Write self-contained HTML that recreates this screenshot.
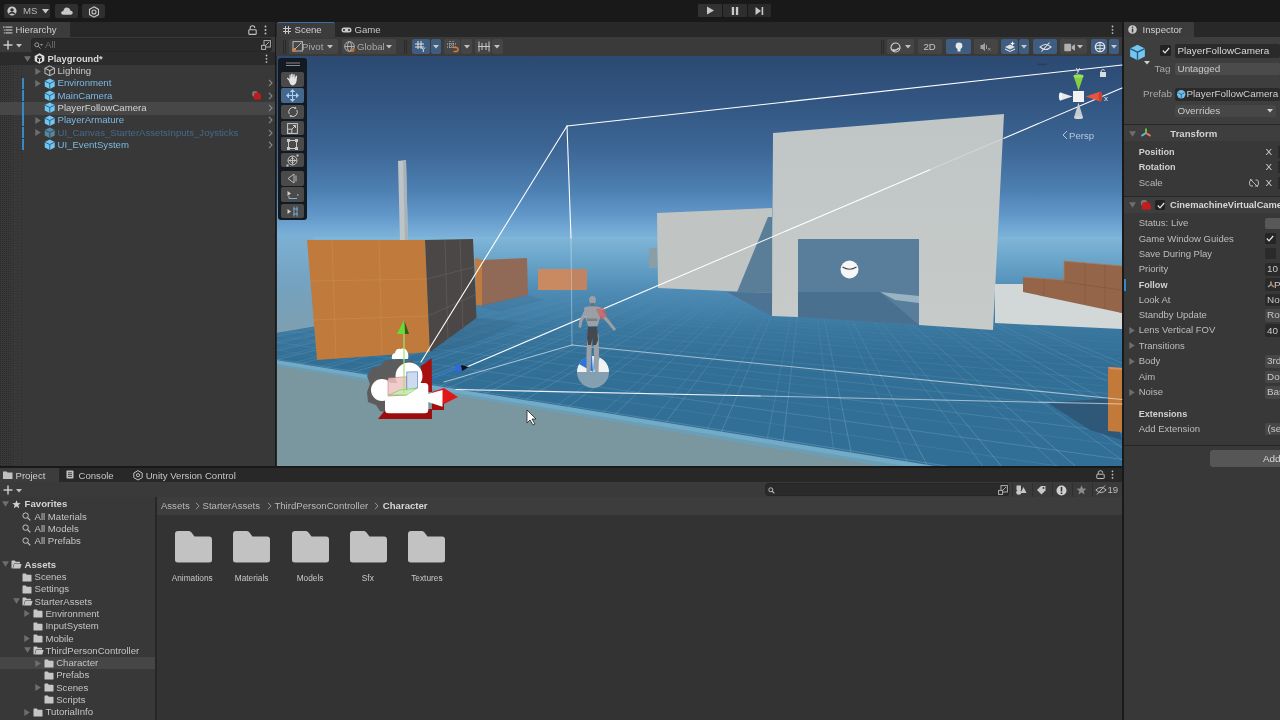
<!DOCTYPE html>
<html><head><meta charset="utf-8">
<style>
*{box-sizing:border-box}
html,body{margin:0;padding:0}
body{width:1280px;height:720px;overflow:hidden;background:#191919;position:relative;-webkit-font-smoothing:antialiased;font-family:"Liberation Sans",sans-serif;font-size:9.6px;color:#c4c4c4}
.a{position:absolute}
.t{position:absolute;white-space:nowrap;line-height:12px}
.b{font-weight:bold}
.panel{position:absolute;background:#383838}
.tabbar{position:absolute;background:#282828}
.tab{position:absolute;background:#3c3c3c}
.tb{position:absolute;background:#3c3c3c}
.btn{position:absolute;background:#2f2f2f;border-radius:2px}
svg{position:absolute;overflow:visible}
</style></head><body>
<div id="root" style="position:absolute;left:0;top:0;width:1280px;height:720px;will-change:transform"><svg width="0" height="0" style="position:absolute">
<defs>
<symbol id="cube" viewBox="0 0 12 12"><polygon points="6,0.6 11.2,3.2 11.2,8.8 6,11.4 0.8,8.8 0.8,3.2" fill="#71c6f2"/><polyline points="0.8,3.2 6,5.8 11.2,3.2 M6,5.8" fill="none" stroke="#2c5f80" stroke-width="1"/><line x1="6" y1="5.8" x2="6" y2="11.4" stroke="#2c5f80" stroke-width="1"/></symbol>
<symbol id="cubeo" viewBox="0 0 12 12"><polygon points="6,0.9 11,3.4 11,8.6 6,11.1 1,8.6 1,3.4" fill="none" stroke="#b8b8b8" stroke-width="1.1"/><polyline points="1,3.4 6,5.9 11,3.4" fill="none" stroke="#b8b8b8" stroke-width="1.1"/><line x1="6" y1="5.9" x2="6" y2="11.1" stroke="#b8b8b8" stroke-width="1.1"/></symbol>
<symbol id="folder" viewBox="0 0 10 9"><path d="M0.5,1.2 Q0.5,0.6 1.1,0.6 L3.8,0.6 L4.8,1.8 L9,1.8 Q9.5,1.8 9.5,2.4 L9.5,8 Q9.5,8.5 9,8.5 L1,8.5 Q0.5,8.5 0.5,8 Z" fill="#c6c6c6"/></symbol>
<symbol id="folderopen" viewBox="0 0 11 9"><path d="M0.5,1.2 Q0.5,0.6 1.1,0.6 L3.8,0.6 L4.8,1.8 L8.6,1.8 Q9.1,1.8 9.1,2.4 L9.1,3.4 L3,3.4 L1.6,8.5 L0.5,8.5 Z" fill="#c6c6c6"/><path d="M3.3,4.1 L10.6,4.1 L9.2,8.5 L2,8.5 Z" fill="#c6c6c6"/></symbol>
<symbol id="tri_r" viewBox="0 0 6 7"><polygon points="0.3,0 5.8,3.5 0.3,7" fill="#6e6e6e"/></symbol>
<symbol id="tri_d" viewBox="0 0 7 6"><polygon points="0,0.3 7,0.3 3.5,5.8" fill="#6e6e6e"/></symbol>
<symbol id="chev" viewBox="0 0 5 8"><polyline points="1,0.8 4,4 1,7.2" fill="none" stroke="#8a8a8a" stroke-width="1.1"/></symbol>
</defs></svg>
<div class="btn" style="left:4px;top:4px;width:46px;height:14px;background:#2f2f2f"></div>
<svg style="left:7px;top:6px" width="10" height="10"><circle cx="5" cy="5" r="4.6" fill="#c8c8c8"/><circle cx="5" cy="3.9" r="1.7" fill="#2c2c2c"/><path d="M1.9,8.2 Q5,5.2 8.1,8.2" stroke="#2c2c2c" stroke-width="1.6" fill="none"/></svg>
<div class="t" style="left:23px;top:5px;color:#b8b8b8;font-size:9.6px">MS</div>
<svg style="left:42px;top:9px" width="7" height="5"><polygon points="0,0 7,0 3.5,4.5" fill="#c8c8c8"/></svg>
<div class="btn" style="left:55px;top:4px;width:23px;height:14px;background:#2f2f2f"></div>
<svg style="left:61px;top:7px" width="12" height="8"><path d="M2.5,7.8 Q0,7.8 0.2,5.6 Q0.5,3.8 2.4,4 Q2.8,1 5.6,0.6 Q8.6,0.6 9.3,3.4 Q11.8,3.6 11.8,5.8 Q11.6,7.8 9.5,7.8 Z" fill="#c8c8c8"/></svg>
<div class="btn" style="left:82px;top:4px;width:23px;height:14px;background:#2f2f2f"></div>
<svg style="left:88px;top:5.5px" width="12" height="12"><polygon points="6,0.8 10.5,3.4 10.5,8.6 6,11.2 1.5,8.6 1.5,3.4" fill="none" stroke="#c8c8c8" stroke-width="1.1"/><circle cx="6" cy="6" r="2" fill="none" stroke="#c8c8c8" stroke-width="1.1"/></svg>
<div class="btn" style="left:698.3px;top:3.8px;width:23.4px;height:13.6px;background:#323232;border-radius:1px"></div>
<div class="btn" style="left:723px;top:3.8px;width:23.6px;height:13.6px;background:#2e2e2e;border-radius:1px"></div>
<div class="btn" style="left:748px;top:3.8px;width:23.4px;height:13.6px;background:#2a2a2a;border-radius:1px"></div>
<svg style="left:706px;top:6px" width="9" height="9"><polygon points="1,0.5 8,4.5 1,8.5" fill="#c8c8c8"/></svg>
<svg style="left:731px;top:6.5px" width="8" height="8"><rect x="0.8" y="0" width="2.3" height="8" fill="#c8c8c8"/><rect x="4.9" y="0" width="2.3" height="8" fill="#c8c8c8"/></svg>
<svg style="left:755px;top:6.5px" width="9" height="8"><polygon points="0.5,0 6,4 0.5,8" fill="#c8c8c8"/><rect x="6.6" y="0" width="1.6" height="8" fill="#c8c8c8"/></svg>


<div class="tabbar" style="left:0;top:22px;width:275px;height:15px"></div>
<div class="tab" style="left:0;top:22px;width:70px;height:15px"></div>
<svg style="left:3px;top:26px" width="10" height="8"><g fill="#c0c0c0"><rect x="0" y="0.5" width="1.6" height="1.2"/><rect x="2.4" y="0.5" width="7" height="1.2"/><rect x="2.4" y="3.4" width="7" height="1.2"/><rect x="2.4" y="6.3" width="7" height="1.2"/><rect x="0.8" y="3.4" width="1" height="1.2"/><rect x="0.8" y="6.3" width="1" height="1.2"/></g></svg>
<div class="t" style="left:15.5px;top:24px;color:#cfcfcf">Hierarchy</div>
<svg style="left:248px;top:24.5px" width="9" height="10"><path d="M2.2,4.8 L2.2,3 Q2.2,0.8 4.5,0.8 Q6.8,0.8 6.8,3" fill="none" stroke="#c0c0c0" stroke-width="1.1"/><rect x="0.8" y="4.8" width="7.4" height="4.6" rx="0.6" fill="none" stroke="#c0c0c0" stroke-width="1.1"/></svg>
<svg style="left:263.5px;top:24.5px" width="3" height="10"><circle cx="1.5" cy="1.5" r="1" fill="#c0c0c0"/><circle cx="1.5" cy="5" r="1" fill="#c0c0c0"/><circle cx="1.5" cy="8.5" r="1" fill="#c0c0c0"/></svg>
<div class="panel" style="left:0;top:37px;width:275px;height:429px"></div>
<div class="tb" style="left:0;top:37px;width:275px;height:15px;background:#3a3a3a"></div>
<svg style="left:3px;top:40px" width="10" height="10"><rect x="4.3" y="0.5" width="1.4" height="9" fill="#d0d0d0"/><rect x="0.5" y="4.3" width="9" height="1.4" fill="#d0d0d0"/></svg>
<svg style="left:15.5px;top:43.5px" width="6" height="4"><polygon points="0,0 6,0 3,3.5" fill="#c0c0c0"/></svg>
<div class="a" style="left:31px;top:38px;width:241px;height:13.5px;background:#2a2a2a;border-radius:3px;border:1px solid #252525"></div>
<svg style="left:34px;top:41.5px" width="9" height="7"><circle cx="2.8" cy="2.8" r="2" fill="none" stroke="#9a9a9a" stroke-width="1"/><line x1="4.2" y1="4.2" x2="6.5" y2="6.5" stroke="#9a9a9a" stroke-width="1"/><polygon points="6,2 9,2 7.5,4" fill="#9a9a9a"/></svg>
<div class="t" style="left:45px;top:38.5px;color:#6a6a6a">All</div>
<svg style="left:261px;top:40px" width="10" height="10"><rect x="3" y="0.6" width="6.4" height="6.4" fill="none" stroke="#b0b0b0" stroke-width="1"/><rect x="0.6" y="5.4" width="4" height="4" fill="#2a2a2a" stroke="#b0b0b0" stroke-width="1"/><line x1="5" y1="5" x2="8" y2="2" stroke="#b0b0b0" stroke-width="1"/></svg>
<div class="a" style="left:0;top:52px;width:275px;height:13px;background:#2b2b2b"></div>
<svg style="left:0;top:65px" width="22" height="401"><defs><pattern id="dots" width="2" height="2" patternUnits="userSpaceOnUse"><rect width="2" height="2" fill="#383838"/><rect x="0" y="0" width="1" height="1" fill="#2a2a2a"/></pattern><pattern id="dots2" width="4" height="3" patternUnits="userSpaceOnUse"><rect width="4" height="3" fill="#383838"/><rect x="1" y="1" width="1" height="1" fill="#2e2e2e"/></pattern></defs><rect x="0" y="0" width="12.5" height="401" fill="url(#dots)"/><rect x="12.5" y="0" width="9.5" height="401" fill="url(#dots2)"/></svg>
<div class="a" style="left:0;top:102px;width:275px;height:12.5px;background:#474747"></div>

<div class="a" style="left:22px;top:77.5px;width:2.2px;height:11.5px;background:#3788c4"></div>
<div class="a" style="left:22px;top:89.5px;width:2.2px;height:11.5px;background:#3788c4"></div>
<div class="a" style="left:22px;top:102px;width:2.2px;height:11.5px;background:#3788c4"></div>
<div class="a" style="left:22px;top:114px;width:2.2px;height:11.5px;background:#3788c4"></div>
<div class="a" style="left:22px;top:126.5px;width:2.2px;height:11.5px;background:#3788c4"></div>
<div class="a" style="left:22px;top:138.5px;width:2.2px;height:11.5px;background:#3788c4"></div>
<svg style="left:24px;top:56px" width="7" height="6"><use href="#tri_d" width="7" height="6"/></svg>
<svg style="left:34px;top:53px" width="11" height="11"><g fill="#e0e0e0"><polygon points="5.5,0.3 10.3,3 10.3,8 5.5,10.7 0.7,8 0.7,3"/></g><g fill="#2b2b2b"><polygon points="5.5,2.3 8.3,3.9 5.5,5.5 2.7,3.9"/><polygon points="3,5 5,6.1 5,9 3,7.9"/><polygon points="8,5 6,6.1 6,9 8,7.9"/></g></svg>
<div class="t b" style="left:47.5px;top:52.5px;color:#d8d8d8;font-size:9.4px">Playground*</div>
<svg style="left:264.5px;top:54px" width="3" height="10"><circle cx="1.5" cy="1.5" r="0.9" fill="#c0c0c0"/><circle cx="1.5" cy="4.8" r="0.9" fill="#c0c0c0"/><circle cx="1.5" cy="8.1" r="0.9" fill="#c0c0c0"/></svg>
<svg style="left:35.3px;top:67.5px" width="6" height="7"><use href="#tri_r" width="6" height="7"/></svg>
<svg style="left:43.5px;top:65.3px;" width="11.5" height="11.5"><use href="#cubeo" width="11.5" height="11.5"/></svg>
<div class="t" style="left:57.5px;top:64.9px;color:#c9c9c9">Lighting</div>
<svg style="left:35.3px;top:79.8px" width="6" height="7"><use href="#tri_r" width="6" height="7"/></svg>
<svg style="left:43.5px;top:77.6px;" width="11.5" height="11.5"><use href="#cube" width="11.5" height="11.5"/></svg>
<div class="t" style="left:57.5px;top:77.2px;color:#7cb8e2">Environment</div>
<svg style="left:267.5px;top:79.3px" width="5" height="8"><use href="#chev" width="5" height="8"/></svg>
<svg style="left:43.5px;top:89.89999999999999px;" width="11.5" height="11.5"><use href="#cube" width="11.5" height="11.5"/></svg>
<div class="t" style="left:57.5px;top:89.5px;color:#7cb8e2">MainCamera</div>
<svg style="left:267.5px;top:91.6px" width="5" height="8"><use href="#chev" width="5" height="8"/></svg>
<svg style="left:43.5px;top:102.3px;" width="11.5" height="11.5"><use href="#cube" width="11.5" height="11.5"/></svg>
<div class="t" style="left:57.5px;top:101.9px;color:#d4d4d4">PlayerFollowCamera</div>
<svg style="left:267.5px;top:104px" width="5" height="8"><use href="#chev" width="5" height="8"/></svg>
<svg style="left:35.3px;top:116.8px" width="6" height="7"><use href="#tri_r" width="6" height="7"/></svg>
<svg style="left:43.5px;top:114.6px;" width="11.5" height="11.5"><use href="#cube" width="11.5" height="11.5"/></svg>
<div class="t" style="left:57.5px;top:114.2px;color:#7cb8e2">PlayerArmature</div>
<svg style="left:267.5px;top:116.3px" width="5" height="8"><use href="#chev" width="5" height="8"/></svg>
<svg style="left:35.3px;top:129.1px" width="6" height="7"><use href="#tri_r" width="6" height="7"/></svg>
<svg style="left:43.5px;top:126.89999999999999px; opacity:0.55" width="11.5" height="11.5"><use href="#cube" width="11.5" height="11.5"/></svg>
<div class="t" style="left:57.5px;top:126.5px;color:#45698a">UI_Canvas_StarterAssetsInputs_Joysticks</div>
<svg style="left:267.5px;top:128.6px" width="5" height="8"><use href="#chev" width="5" height="8"/></svg>
<svg style="left:43.5px;top:139.3px;" width="11.5" height="11.5"><use href="#cube" width="11.5" height="11.5"/></svg>
<div class="t" style="left:57.5px;top:138.9px;color:#7cb8e2">UI_EventSystem</div>
<svg style="left:267.5px;top:141px" width="5" height="8"><use href="#chev" width="5" height="8"/></svg>
<svg style="left:251px;top:90px" width="11" height="10"><circle cx="4" cy="4" r="3" fill="#777"/><path d="M3,9.5 L3,5 Q3,2.5 6,2.5 Q9.5,2.5 10,5.5 L10,8 Q10,9.5 8.5,9.5 Z" fill="#c41a1a"/></svg>

<div class="tabbar" style="left:276px;top:22px;width:846px;height:15px"></div>
<div class="tab" style="left:277px;top:22px;width:58px;height:15px;border-top:1px solid #3b6ea5;border-radius:2px 2px 0 0"></div>
<svg style="left:283px;top:26px" width="8" height="8"><g stroke="#c8c8c8" stroke-width="1"><line x1="2.5" y1="0" x2="2.5" y2="8"/><line x1="5.5" y1="0" x2="5.5" y2="8"/><line x1="0" y1="2.5" x2="8" y2="2.5"/><line x1="0" y1="5.5" x2="8" y2="5.5"/></g></svg>
<div class="t" style="left:294.5px;top:24px;color:#d0d0d0">Scene</div>
<svg style="left:341px;top:27px" width="11" height="6"><rect x="0.5" y="0.5" width="10" height="5" rx="2.5" fill="#c8c8c8"/><circle cx="3" cy="3" r="1" fill="#282828"/><circle cx="8" cy="3" r="1" fill="#282828"/></svg>
<div class="t" style="left:354.5px;top:24px;color:#c8c8c8">Game</div>
<svg style="left:1110.5px;top:25px" width="3" height="10"><circle cx="1.5" cy="1.5" r="0.9" fill="#c0c0c0"/><circle cx="1.5" cy="4.8" r="0.9" fill="#c0c0c0"/><circle cx="1.5" cy="8.1" r="0.9" fill="#c0c0c0"/></svg>
<div class="tb" style="left:276px;top:37px;width:846px;height:19px;background:#3a3a3a"></div>

<div class="a" style="left:289px;top:39px;width:49.3px;height:15.3px;background:#454545;border-radius:2px"></div>
<div class="a" style="left:341.6px;top:39px;width:54.8px;height:15.3px;background:#454545;border-radius:2px"></div>
<div class="a" style="left:412px;top:39px;width:17.8px;height:15.3px;background:#3e5d80;border-radius:2px"></div>
<div class="a" style="left:430.5px;top:39px;width:10.5px;height:15.3px;background:#3e5d80;border-radius:2px"></div>
<div class="a" style="left:443.9px;top:39px;width:16.1px;height:15.3px;background:#454545;border-radius:2px"></div>
<div class="a" style="left:461px;top:39px;width:11.0px;height:15.3px;background:#454545;border-radius:2px"></div>
<div class="a" style="left:475.4px;top:39px;width:15.6px;height:15.3px;background:#454545;border-radius:2px"></div>
<div class="a" style="left:492px;top:39px;width:10.6px;height:15.3px;background:#454545;border-radius:2px"></div>
<div class="a" style="left:886.6px;top:39px;width:27.9px;height:15.3px;background:#454545;border-radius:2px"></div>
<div class="a" style="left:918.3px;top:39px;width:24.0px;height:15.3px;background:#454545;border-radius:2px"></div>
<div class="a" style="left:945.6px;top:39px;width:25.6px;height:15.3px;background:#3e5d80;border-radius:2px"></div>
<div class="a" style="left:973.7px;top:39px;width:24.3px;height:15.3px;background:#454545;border-radius:2px"></div>
<div class="a" style="left:1001px;top:39px;width:16.9px;height:15.3px;background:#3e5d80;border-radius:2px"></div>
<div class="a" style="left:1019.3px;top:39px;width:9.6px;height:15.3px;background:#3e5d80;border-radius:2px"></div>
<div class="a" style="left:1032.7px;top:39px;width:24.1px;height:15.3px;background:#3e5d80;border-radius:2px"></div>
<div class="a" style="left:1060.2px;top:39px;width:27.3px;height:15.3px;background:#454545;border-radius:2px"></div>
<div class="a" style="left:1091.4px;top:39px;width:15.9px;height:15.3px;background:#3e5d80;border-radius:2px"></div>
<div class="a" style="left:1109px;top:39px;width:10.3px;height:15.3px;background:#3e5d80;border-radius:2px"></div>

<div class="a" style="left:282.5px;top:40px;width:1px;height:14px;background:#2a2a2a"></div><div class="a" style="left:284.5px;top:40px;width:1px;height:14px;background:#2a2a2a"></div>
<div class="a" style="left:404px;top:40px;width:1px;height:14px;background:#2a2a2a"></div><div class="a" style="left:406px;top:40px;width:1px;height:14px;background:#2a2a2a"></div>
<div class="a" style="left:880.5px;top:40px;width:1px;height:14px;background:#2a2a2a"></div><div class="a" style="left:882.5px;top:40px;width:1px;height:14px;background:#2a2a2a"></div>
<svg style="left:292px;top:41px" width="11" height="11"><rect x="1" y="0.6" width="9.4" height="9.4" fill="none" stroke="#b8b8b8" stroke-width="1"/><line x1="2" y1="9" x2="9.5" y2="1.5" stroke="#b8b8b8" stroke-width="1"/><circle cx="2" cy="9" r="1.6" fill="none" stroke="#e07a30" stroke-width="1"/></svg>
<div class="t" style="left:302px;top:40.5px;color:#a8a8a8">Pivot</div>
<svg style="left:326.5px;top:45px" width="6" height="4"><polygon points="0,0 6,0 3,3.5" fill="#c0c0c0"/></svg>
<svg style="left:344px;top:41px" width="12" height="12"><circle cx="5.5" cy="5.5" r="4.8" fill="none" stroke="#b8b8b8" stroke-width="1"/><ellipse cx="5.5" cy="5.5" rx="2" ry="4.8" fill="none" stroke="#b8b8b8" stroke-width="0.9"/><line x1="0.7" y1="5.5" x2="10.3" y2="5.5" stroke="#b8b8b8" stroke-width="0.9"/><circle cx="8.5" cy="9" r="1.6" fill="none" stroke="#e07a30" stroke-width="1"/></svg>
<div class="t" style="left:357px;top:40.5px;color:#a8a8a8">Global</div>
<svg style="left:385.5px;top:45px" width="6" height="4"><polygon points="0,0 6,0 3,3.5" fill="#c0c0c0"/></svg>
<svg style="left:415px;top:41px" width="11" height="11"><g stroke="#e0e0e0" stroke-width="1"><line x1="3" y1="0" x2="3" y2="8"/><line x1="6" y1="0" x2="6" y2="8"/><line x1="0" y1="3" x2="9" y2="3"/><line x1="0" y1="6" x2="9" y2="6"/><polyline points="6.5,6.5 8.3,8.5 10,6.5" fill="none"/><line x1="8.3" y1="8.5" x2="8.3" y2="11"/></g></svg>
<svg style="left:433px;top:45px" width="6" height="4"><polygon points="0,0 6,0 3,3.5" fill="#c8c8c8"/></svg>
<svg style="left:447px;top:41px" width="12" height="11"><g stroke="#d0d0d0" stroke-width="0.9" stroke-dasharray="1 1"><line x1="3" y1="0" x2="3" y2="8"/><line x1="6" y1="0" x2="6" y2="8"/><line x1="0" y1="3" x2="9" y2="3"/><line x1="0" y1="6" x2="9" y2="6"/></g><path d="M6.5,6.5 L9,6.5 Q11,6.5 11,8.5 Q11,10.5 9,10.5 L6.5,10.5" fill="none" stroke="#e07a30" stroke-width="1.4"/></svg>
<svg style="left:463.5px;top:45px" width="6" height="4"><polygon points="0,0 6,0 3,3.5" fill="#c0c0c0"/></svg>
<svg style="left:478px;top:41px" width="12" height="11"><g stroke="#c8c8c8" stroke-width="1"><line x1="1" y1="0.5" x2="1" y2="10.5"/><line x1="11" y1="0.5" x2="11" y2="10.5"/><line x1="0" y1="5.5" x2="12" y2="5.5"/><line x1="4" y1="2" x2="4" y2="9"/><line x1="8" y1="2" x2="8" y2="9"/></g></svg>
<svg style="left:494px;top:45px" width="6" height="4"><polygon points="0,0 6,0 3,3.5" fill="#c0c0c0"/></svg>

<svg style="left:890px;top:41.5px" width="11" height="11"><circle cx="5.5" cy="5.5" r="4.5" fill="none" stroke="#d0d0d0" stroke-width="1.2"/><path d="M2.5,7.5 Q5.5,9.5 9,6" fill="none" stroke="#d0d0d0" stroke-width="1.6"/></svg>
<svg style="left:905px;top:45px" width="6" height="4"><polygon points="0,0 6,0 3,3.5" fill="#c0c0c0"/></svg>
<div class="t" style="left:923.5px;top:40.5px;color:#c8c8c8">2D</div>
<svg style="left:954.5px;top:41.5px" width="8" height="11"><circle cx="4" cy="3.8" r="3.4" fill="#e8e8e8"/><rect x="2.5" y="6.5" width="3" height="3" fill="#e8e8e8"/></svg>
<svg style="left:980px;top:42px" width="12" height="10"><polygon points="0.5,3 2.5,3 5,0.8 5,9.2 2.5,7 0.5,7" fill="#a0a0a0"/><line x1="6.5" y1="3" x2="6.5" y2="7" stroke="#a0a0a0"/><path d="M8,6 L10.5,8.5 M10.5,6 L8,8.5" stroke="#a0a0a0" stroke-width="0.8"/></svg>
<svg style="left:1004px;top:41px" width="12" height="11"><path d="M1,6 L6,3.5 L11,6 L6,8.5 Z" fill="#e0e0e0"/><path d="M1,8 L6,10.5 L11,8" fill="none" stroke="#e0e0e0" stroke-width="1.1"/><path d="M8.5,0 L9.2,2 L11,2.6 L9.2,3.2 L8.5,5 L7.8,3.2 L6,2.6 L7.8,2 Z" fill="#ffffff"/></svg>
<svg style="left:1021px;top:45px" width="6" height="4"><polygon points="0,0 6,0 3,3.5" fill="#c8c8c8"/></svg>
<svg style="left:1038.5px;top:42px" width="13" height="10"><path d="M1,5 Q6.5,0 12,5 Q6.5,10 1,5 Z" fill="none" stroke="#e0e0e0" stroke-width="1.1"/><line x1="2.5" y1="9.5" x2="10.5" y2="0.5" stroke="#e0e0e0" stroke-width="1.1"/></svg>
<svg style="left:1064px;top:42.5px" width="12" height="9"><rect x="0.3" y="0.8" width="6.8" height="7.4" rx="0.8" fill="#b0b0b0"/><polygon points="7.8,3.2 11,1.2 11,7.8 7.8,5.8" fill="#b0b0b0"/></svg>
<svg style="left:1077px;top:45px" width="6" height="4"><polygon points="0,0 6,0 3,3.5" fill="#c0c0c0"/></svg>
<svg style="left:1093.5px;top:41px" width="12" height="12"><circle cx="6" cy="6" r="4.7" fill="none" stroke="#e8e8e8" stroke-width="1.2"/><ellipse cx="6" cy="6" rx="4.7" ry="1.8" fill="none" stroke="#e8e8e8" stroke-width="0.9"/><line x1="6" y1="1" x2="6" y2="11" stroke="#e8e8e8" stroke-width="0.9"/></svg>
<svg style="left:1111px;top:45px" width="6" height="4"><polygon points="0,0 6,0 3,3.5" fill="#c8c8c8"/></svg>

<div id="viewport" class="a" style="left:276px;top:56px;width:846px;height:410px;background:#3a6f99;overflow:hidden"></div>
<svg style="left:276px;top:56px" width="846" height="410" viewBox="276 56 846 410">
<defs>
<linearGradient id="sky" x1="0" y1="56" x2="0" y2="238" gradientUnits="userSpaceOnUse">
<stop offset="0" stop-color="#2c4a72"/><stop offset="0.24" stop-color="#325580"/><stop offset="0.52" stop-color="#3d6796"/><stop offset="0.74" stop-color="#4d80b2"/><stop offset="0.87" stop-color="#6197c8"/><stop offset="1" stop-color="#7db3da"/>
</linearGradient>
<linearGradient id="far" x1="0" y1="237" x2="0" y2="360" gradientUnits="userSpaceOnUse">
<stop offset="0" stop-color="#80b6d8"/><stop offset="0.15" stop-color="#6ea8cc"/><stop offset="0.45" stop-color="#4d8bb4"/><stop offset="0.75" stop-color="#3a779f"/><stop offset="1" stop-color="#326f96"/>
</linearGradient>
<linearGradient id="leftplat" x1="0" y1="237" x2="0" y2="333" gradientUnits="userSpaceOnUse">
<stop offset="0" stop-color="#7cb0d2"/><stop offset="0.5" stop-color="#74a2bf"/><stop offset="1" stop-color="#7e9fb0"/>
</linearGradient>
<linearGradient id="wall" x1="0" y1="114" x2="0" y2="330" gradientUnits="userSpaceOnUse">
<stop offset="0" stop-color="#c0c6c5"/><stop offset="1" stop-color="#c6cbca"/>
</linearGradient>
<linearGradient id="gridfade" x1="0" y1="280" x2="0" y2="466" gradientUnits="userSpaceOnUse"><stop offset="0" stop-color="#fff" stop-opacity="0"/><stop offset="0.4" stop-color="#fff" stop-opacity="0.55"/><stop offset="1" stop-color="#fff" stop-opacity="1"/></linearGradient>
<mask id="gridmask" maskUnits="userSpaceOnUse" x="276" y="56" width="846" height="410"><rect x="276" y="56" width="846" height="410" fill="url(#gridfade)"/></mask>
<clipPath id="floorclip"><polygon points="276,333 317,326 476,318 540,290 657,266 1122,290 1122,466 276,466"/></clipPath>
</defs>
<rect x="276" y="56" width="846" height="182" fill="url(#sky)"/>
<rect x="276" y="237" width="846" height="229" fill="url(#far)"/>
<polygon points="276,237 313,237 317,326 276,333" fill="url(#leftplat)"/>
<g clip-path="url(#floorclip)" mask="url(#gridmask)" stroke="#a8cce0" stroke-width="0.8" fill="none" opacity="0.7">
<line x1="1130.0" y1="366.4" x2="378.6" y2="56.0" opacity="0.55"/>
<line x1="1130.0" y1="371.0" x2="392.7" y2="56.0" opacity="0.4"/>
<line x1="1130.0" y1="386.6" x2="434.9" y2="56.0" opacity="0.55"/>
<line x1="1130.0" y1="392.7" x2="448.9" y2="56.0" opacity="0.4"/>
<line x1="1130.0" y1="414.0" x2="491.1" y2="56.0" opacity="0.55"/>
<line x1="1130.0" y1="422.4" x2="505.1" y2="56.0" opacity="0.4"/>
<line x1="1130.0" y1="453.1" x2="547.2" y2="56.0" opacity="0.55"/>
<line x1="1130.0" y1="465.7" x2="561.3" y2="56.0" opacity="0.4"/>
<line x1="1079.7" y1="470.0" x2="603.4" y2="56.0" opacity="0.55"/>
<line x1="1060.9" y1="470.0" x2="617.4" y2="56.0" opacity="0.4"/>
<line x1="1004.6" y1="470.0" x2="659.4" y2="56.0" opacity="0.55"/>
<line x1="985.9" y1="470.0" x2="673.4" y2="56.0" opacity="0.4"/>
<line x1="929.6" y1="470.0" x2="715.4" y2="56.0" opacity="0.55"/>
<line x1="910.9" y1="470.0" x2="729.4" y2="56.0" opacity="0.4"/>
<line x1="854.7" y1="470.0" x2="771.4" y2="56.0" opacity="0.55"/>
<line x1="836.0" y1="470.0" x2="785.3" y2="56.0" opacity="0.4"/>
<line x1="779.9" y1="470.0" x2="827.3" y2="56.0" opacity="0.55"/>
<line x1="761.2" y1="470.0" x2="841.2" y2="56.0" opacity="0.4"/>
<line x1="705.1" y1="470.0" x2="883.1" y2="56.0" opacity="0.55"/>
<line x1="686.4" y1="470.0" x2="897.1" y2="56.0" opacity="0.4"/>
<line x1="630.4" y1="470.0" x2="938.9" y2="56.0" opacity="0.55"/>
<line x1="611.7" y1="470.0" x2="952.8" y2="56.0" opacity="0.4"/>
<line x1="555.8" y1="470.0" x2="994.6" y2="56.0" opacity="0.55"/>
<line x1="537.1" y1="470.0" x2="1008.6" y2="56.0" opacity="0.4"/>
<line x1="481.2" y1="470.0" x2="1050.3" y2="56.0" opacity="0.55"/>
<line x1="462.6" y1="470.0" x2="1064.2" y2="56.0" opacity="0.4"/>
<line x1="406.7" y1="470.0" x2="1105.9" y2="56.0" opacity="0.55"/>
<line x1="388.1" y1="470.0" x2="1119.8" y2="56.0" opacity="0.4"/>
<line x1="332.3" y1="470.0" x2="1130.0" y2="71.7" opacity="0.55"/>
<line x1="313.7" y1="470.0" x2="1130.0" y2="77.8" opacity="0.4"/>
<line x1="270.0" y1="464.8" x2="1130.0" y2="93.6" opacity="0.55"/>
<line x1="270.0" y1="457.2" x2="1130.0" y2="98.1" opacity="0.4"/>
<line x1="270.0" y1="437.2" x2="1130.0" y2="110.2" opacity="0.55"/>
<line x1="270.0" y1="431.3" x2="1130.0" y2="113.7" opacity="0.4"/>
<line x1="270.0" y1="415.5" x2="1130.0" y2="123.2" opacity="0.55"/>
<line x1="270.0" y1="410.7" x2="1130.0" y2="126.1" opacity="0.4"/>
<line x1="270.0" y1="397.9" x2="1130.0" y2="133.8" opacity="0.55"/>
<line x1="270.0" y1="394.1" x2="1130.0" y2="136.1" opacity="0.4"/>
<line x1="270.0" y1="383.5" x2="1130.0" y2="142.5" opacity="0.55"/>
<line x1="270.0" y1="380.3" x2="1130.0" y2="144.4" opacity="0.4"/>
<line x1="270.0" y1="371.4" x2="1130.0" y2="149.8" opacity="0.55"/>
<line x1="270.0" y1="368.7" x2="1130.0" y2="151.4" opacity="0.4"/>
<line x1="270.0" y1="361.1" x2="1130.0" y2="156.0" opacity="0.55"/>
<line x1="270.0" y1="358.8" x2="1130.0" y2="157.4" opacity="0.4"/>
<line x1="270.0" y1="352.2" x2="1130.0" y2="161.3" opacity="0.55"/>
<line x1="270.0" y1="350.2" x2="1130.0" y2="162.5" opacity="0.4"/>
<line x1="270.0" y1="344.5" x2="1130.0" y2="165.9" opacity="0.55"/>
<line x1="270.0" y1="342.8" x2="1130.0" y2="167.0" opacity="0.4"/>
<line x1="270.0" y1="337.8" x2="1130.0" y2="170.0" opacity="0.55"/>
<line x1="270.0" y1="336.2" x2="1130.0" y2="170.9" opacity="0.4"/>
<line x1="270.0" y1="331.8" x2="1130.0" y2="173.6" opacity="0.55"/>
<line x1="270.0" y1="330.4" x2="1130.0" y2="174.4" opacity="0.4"/>
<line x1="270.0" y1="326.4" x2="1130.0" y2="176.8" opacity="0.55"/>
<line x1="270.0" y1="325.2" x2="1130.0" y2="177.5" opacity="0.4"/>
<line x1="270.0" y1="321.7" x2="1130.0" y2="179.7" opacity="0.55"/>
<line x1="270.0" y1="320.5" x2="1130.0" y2="180.3" opacity="0.4"/>
<line x1="270.0" y1="317.3" x2="1130.0" y2="182.3" opacity="0.55"/>
<line x1="270.0" y1="316.3" x2="1130.0" y2="182.9" opacity="0.4"/>
<line x1="270.0" y1="313.4" x2="1130.0" y2="184.6" opacity="0.55"/>
<line x1="270.0" y1="312.5" x2="1130.0" y2="185.2" opacity="0.4"/>
<line x1="270.0" y1="309.9" x2="1130.0" y2="186.8" opacity="0.55"/>
<line x1="270.0" y1="309.0" x2="1130.0" y2="187.3" opacity="0.4"/>
<line x1="270.0" y1="306.6" x2="1130.0" y2="188.7" opacity="0.55"/>
<line x1="270.0" y1="305.8" x2="1130.0" y2="189.2" opacity="0.4"/>
<line x1="270.0" y1="303.6" x2="1130.0" y2="190.5" opacity="0.55"/>
<line x1="270.0" y1="302.9" x2="1130.0" y2="190.9" opacity="0.4"/>
<line x1="270.0" y1="300.9" x2="1130.0" y2="192.2" opacity="0.55"/>
<line x1="270.0" y1="300.2" x2="1130.0" y2="192.6" opacity="0.4"/>
<line x1="270.0" y1="298.3" x2="1130.0" y2="193.7" opacity="0.55"/>
<line x1="270.0" y1="297.7" x2="1130.0" y2="194.1" opacity="0.4"/>
<line x1="270.0" y1="296.0" x2="1130.0" y2="195.1" opacity="0.55"/>
<line x1="270.0" y1="295.4" x2="1130.0" y2="195.5" opacity="0.4"/>
<line x1="270.0" y1="293.8" x2="1130.0" y2="196.4" opacity="0.55"/>
<line x1="270.0" y1="293.3" x2="1130.0" y2="196.8" opacity="0.4"/>
<line x1="270.0" y1="291.7" x2="1130.0" y2="197.7" opacity="0.55"/>
<line x1="270.0" y1="291.3" x2="1130.0" y2="198.0" opacity="0.4"/>
<line x1="270.0" y1="289.8" x2="1130.0" y2="198.8" opacity="0.55"/>
<line x1="270.0" y1="289.4" x2="1130.0" y2="199.1" opacity="0.4"/>
<line x1="270.0" y1="288.0" x2="1130.0" y2="199.9" opacity="0.55"/>
<line x1="270.0" y1="287.6" x2="1130.0" y2="200.1" opacity="0.4"/>
<line x1="270.0" y1="286.4" x2="1130.0" y2="200.9" opacity="0.55"/>
<line x1="270.0" y1="286.0" x2="1130.0" y2="201.1" opacity="0.4"/>
<line x1="270.0" y1="284.8" x2="1130.0" y2="201.8" opacity="0.55"/>
<line x1="270.0" y1="284.4" x2="1130.0" y2="202.1" opacity="0.4"/>
<line x1="270.0" y1="283.3" x2="1130.0" y2="202.7" opacity="0.55"/>
<line x1="270.0" y1="283.0" x2="1130.0" y2="203.0" opacity="0.4"/>
<line x1="270.0" y1="281.9" x2="1130.0" y2="203.6" opacity="0.55"/>
<line x1="270.0" y1="281.6" x2="1130.0" y2="203.8" opacity="0.4"/>
<line x1="270.0" y1="280.6" x2="1130.0" y2="204.4" opacity="0.55"/>
<line x1="270.0" y1="280.3" x2="1130.0" y2="204.6" opacity="0.4"/>
<line x1="270.0" y1="279.3" x2="1130.0" y2="205.1" opacity="0.55"/>
<line x1="270.0" y1="279.0" x2="1130.0" y2="205.3" opacity="0.4"/>
<line x1="270.0" y1="278.2" x2="1130.0" y2="205.8" opacity="0.55"/>
<line x1="270.0" y1="277.9" x2="1130.0" y2="206.0" opacity="0.4"/>
<line x1="270.0" y1="277.0" x2="1130.0" y2="206.5" opacity="0.55"/>
<line x1="270.0" y1="276.8" x2="1130.0" y2="206.7" opacity="0.4"/>
<line x1="518.6" y1="470.0" x2="270.0" y2="412.6" opacity="0.57"/>
<line x1="631.5" y1="470.0" x2="270.0" y2="394.9" opacity="0.28"/>
<line x1="744.5" y1="470.0" x2="270.0" y2="380.4" opacity="0.54"/>
<line x1="857.7" y1="470.0" x2="270.0" y2="368.3" opacity="0.26"/>
<line x1="971.1" y1="470.0" x2="270.0" y2="358.0" opacity="0.50"/>
<line x1="1084.6" y1="470.0" x2="270.0" y2="349.2" opacity="0.24"/>
<line x1="1130.0" y1="460.5" x2="270.0" y2="341.5" opacity="0.46"/>
<line x1="1130.0" y1="446.4" x2="270.0" y2="334.9" opacity="0.22"/>
<line x1="1130.0" y1="433.9" x2="270.0" y2="328.9" opacity="0.43"/>
<line x1="1130.0" y1="422.7" x2="270.0" y2="323.7" opacity="0.21"/>
<line x1="1130.0" y1="412.8" x2="270.0" y2="319.0" opacity="0.39"/>
<line x1="1130.0" y1="403.8" x2="270.0" y2="314.7" opacity="0.19"/>
<line x1="1130.0" y1="395.7" x2="270.0" y2="310.9" opacity="0.36"/>
<line x1="1130.0" y1="388.3" x2="270.0" y2="307.4" opacity="0.17"/>
<line x1="1130.0" y1="381.5" x2="270.0" y2="304.2" opacity="0.32"/>
<line x1="1130.0" y1="375.4" x2="270.0" y2="301.3" opacity="0.15"/>
<line x1="1130.0" y1="369.7" x2="270.0" y2="298.6" opacity="0.29"/>
<line x1="1130.0" y1="364.4" x2="270.0" y2="296.1" opacity="0.13"/>
<line x1="1130.0" y1="359.5" x2="270.0" y2="293.8" opacity="0.25"/>
<line x1="1130.0" y1="355.0" x2="270.0" y2="291.7" opacity="0.12"/>
<line x1="1130.0" y1="350.8" x2="270.0" y2="289.7" opacity="0.21"/>
<line x1="1130.0" y1="346.9" x2="270.0" y2="287.8" opacity="0.10"/>
<line x1="1130.0" y1="343.2" x2="270.0" y2="286.1" opacity="0.18"/>
<line x1="1130.0" y1="339.7" x2="270.0" y2="284.5" opacity="0.08"/>
<line x1="1130.0" y1="336.5" x2="270.0" y2="282.9" opacity="0.14"/>
<line x1="1130.0" y1="333.5" x2="270.0" y2="281.5" opacity="0.06"/>
<line x1="1130.0" y1="330.6" x2="270.0" y2="280.1" opacity="0.11"/>
<line x1="1130.0" y1="327.9" x2="270.0" y2="278.9" opacity="0.05"/>
<line x1="1130.0" y1="325.3" x2="270.0" y2="277.7" opacity="0.10"/>
<line x1="1130.0" y1="322.9" x2="270.0" y2="276.5" opacity="0.05"/>
<line x1="1130.0" y1="320.5" x2="270.0" y2="275.4" opacity="0.10"/>
<line x1="1130.0" y1="318.3" x2="270.0" y2="274.4" opacity="0.05"/>
</g>
<!-- foreground platform -->
<polygon points="276,360 935,466 276,466" fill="#72abc8"/>
<polygon points="276,363.5 905,466 276,466" fill="#6c9fb6"/>
<polygon points="276,366 880,466 276,466" fill="#7a969f"/>
<!-- pole -->
<polygon points="398,161 406,160 408,242 400,242" fill="#bcc4c8"/>
<polygon points="403,160.5 406,160 408,242 405,242" fill="#a9b2b7"/>
<!-- mid orange box -->
<polygon points="475,258 482,260 482,306 476,305" fill="#c07b40"/>
<polygon points="482,260 527,258 528,295 482,306" fill="#916a57"/>
<polygon points="476,306 528,295 545,300 500,312" fill="#3f6f94" opacity="0.35"/>
<!-- small box -->
<polygon points="538,269 587,269 587,290 538,290" fill="#c98a62"/>
<polygon points="570,269 587,269 587,290 570,290" fill="#c08463"/>
<!-- gray small box -->
<rect x="649" y="248" width="8" height="20" fill="#8a9ea8"/>
<!-- big orange box -->
<polygon points="476.5,318 430,352 470,345 520,322" fill="#355f80" opacity="0.3"/>
<polygon points="307,240 425,240 430,352 317,360" fill="#bf7a3c"/>
<polygon points="425,240 473,239 476.5,318 430,352" fill="#4b4746"/>
<g stroke="#d29060" stroke-width="0.7" opacity="0.6">
<line x1="332" y1="240" x2="336" y2="358"/><line x1="379" y1="240" x2="382" y2="355"/>
<line x1="310" y1="281" x2="427" y2="279"/><line x1="313" y1="320" x2="428" y2="316"/>
</g>
<g stroke="#625e5c" stroke-width="0.7">
<line x1="445" y1="240" x2="448" y2="340"/><line x1="460" y1="239" x2="463" y2="330"/>
<line x1="427" y1="279" x2="474" y2="267"/><line x1="428" y1="316" x2="475" y2="295"/>
</g>
<!-- left wall -->
<polygon points="657,213 772,208 772,293 658,288" fill="#c0c5c4"/>
<polygon points="768,217 772,217 772,293 737,292" fill="#5b7e98"/>
<polygon points="727,292 772,293 772,316 760,310" fill="#4d7394"/>
<!-- big wall -->
<polygon points="773,133 1004,114 993,330 919,325 919,239 798,239 798,317 772,316" fill="url(#wall)"/>
<polygon points="798,239 919,239 919,325 798,317" fill="#587e9b"/><polygon points="880,292 919,296 919,303 895,300" fill="#a9c0cc" opacity="0.8"/>
<polygon points="798,292 880,292 919,325 798,317" fill="#4a7090"/>
<circle cx="849.5" cy="269.5" r="9" fill="#f6f6f6"/>
<path d="M842.5,267 Q849.5,271.5 856.5,267" fill="none" stroke="#4a4a4a" stroke-width="1.1"/>
<!-- right area -->
<polygon points="995,284 1023,284 1122,313 1122,329 995,323" fill="#d2d8d8"/>
<polygon points="1023,277 1064,280 1064,261 1122,266 1122,313 1023,292" fill="#95654a"/>
<polyline points="1023,277 1064,280 1064,261 1122,266" fill="none" stroke="#b07a58" stroke-width="0.8"/>
<g stroke="#7a5038" stroke-width="0.6" opacity="0.8"><line x1="1044" y1="279" x2="1044" y2="296"/><line x1="1085" y1="263" x2="1085" y2="304"/><line x1="1105" y1="265" x2="1105" y2="309"/><line x1="1064" y1="282" x2="1122" y2="290"/></g>
<polygon points="1048,403 1110,398 1122,440 1090,430" fill="#2f5778"/>
<polygon points="1108,367 1122,368 1122,432 1108,431" fill="#c27a3a"/><polygon points="1108,367 1122,368 1122,370 1110,369" fill="#d89060"/>
<!-- frustum lines -->
<g stroke="#ffffff" fill="none" stroke-linecap="round">
<line x1="567" y1="126" x2="1122" y2="65" stroke-width="1.1"/>
<line x1="567" y1="126" x2="571" y2="238" stroke-width="1.1"/>
<line x1="571" y1="238" x2="572" y2="345" stroke-width="1" opacity="0.35"/>
<line x1="567" y1="126" x2="421" y2="362" stroke-width="1.1"/>
<line x1="462" y1="369" x2="930" y2="169.7" stroke-width="1.1"/><line x1="930" y1="169.7" x2="1004" y2="138.2" stroke-width="1" opacity="0.3"/><line x1="1004" y1="138.2" x2="1122" y2="88" stroke-width="1.1"/>
<line x1="456" y1="389.5" x2="760" y2="396" stroke-width="1.2" opacity="0.9"/><line x1="760" y1="396" x2="1122" y2="404" stroke-width="1.1" opacity="0.55"/>
<line x1="444" y1="382" x2="572" y2="345" stroke-width="1" opacity="0.6"/>
<line x1="572" y1="345" x2="1122" y2="399.5" stroke-width="1.1" opacity="0.55"/>

</g>
<!-- character -->
<g>
<path d="M577,372 A16,16 0 0 1 609,372 Z" fill="#f0f3f4"/>
<path d="M577,372 A16,16 0 0 0 609,372 Z" fill="#93a9b5" opacity="0.85"/>
<path d="M593,372 L579,364 A16,16 0 0 1 592,356 Z" fill="#2c74d8"/>
<path d="M593,372 L594,356 A16,16 0 0 1 600,357.5 Z" fill="#3aa6e0"/>
<g fill="#9aa0a5">
<ellipse cx="592.5" cy="300" rx="3.4" ry="4"/>
<rect x="591" y="303" width="3" height="4" fill="#6a6e72"/>
<path d="M584,307.5 Q592.5,305 601,307.5 L600,318 L597.5,326 L588,326 L585.5,318 Z"/>
<path d="M585,309 L579.5,320 L578.5,327 L581,328 L582.5,321 L587,313 Z"/>
<path d="M600,309 L609,320 L616,329 L614,331 L606.5,322 L598,313 Z"/>
<path d="M587.5,334 L592.5,334 L591.5,352 L590.5,372 L586.5,372 L586.5,352 Z"/>
<path d="M593.5,334 L598.5,334 L599,352 L598.5,372 L594.5,372 L593.8,352 Z"/>
</g>
<path d="M588,327 L597,327 L598,340 L596,345 L593,345 L592.5,338 L591,345 L588,345 L587,338 Z" fill="#45494d"/>
<rect x="587" y="318.5" width="10.5" height="2.5" fill="#7a7e82"/>
<path d="M596,309 L604,308 L607,316 L601,320 Z" fill="#d06060" opacity="0.75"/>
</g>
<!-- camera gizmo -->
<g>
<path d="M394,360 L400,358 L404,362 L412,360 L416,366 L422,370 L423,380 L421,392 L424,402 L418,408 L414,413 L404,413 L398,409 L390,413 L380,411 L376,405 L368,402 L367,392 L370,384 L367,376 L372,368 L380,366 L386,360 Z" fill="#5c5c5c"/>
<polygon points="421,366 431.7,358.3 432,392 421,392" fill="#a81010"/>
<polygon points="378,419 432,419 432,392 444,390 444,410 432,410 432,419" fill="#a01010"/>
<polygon points="378,419 432,419 432,409 386,409" fill="#9c0e0e"/>
<polygon points="432,392 444,388 458,397 444,404" fill="#e01818"/>
<circle cx="382" cy="390" r="11" fill="#ffffff"/>
<circle cx="409" cy="376" r="13.5" fill="#ffffff"/>
<rect x="385" y="383" width="43.3" height="30.3" rx="3.5" fill="#ffffff"/>
<polygon points="428,394 442.5,390 442.5,406.7 428,402" fill="#ffffff"/>
<path d="M392,359 Q391,354 395,353 Q396,348 401,349 Q405,347 407,351 Q409,354 408,359 Z" fill="#ffffff"/>
<polygon points="388,378 406.7,376.7 406.7,395 388,396" fill="#f0c4c4" opacity="0.85" stroke="#c86060" stroke-width="0.6"/>
<polygon points="406.7,372 417.5,371.7 417.5,388 406.7,391" fill="#c8d8f0" opacity="0.9" stroke="#4060c0" stroke-width="0.6"/>
<polygon points="389,395 406.7,395 417.5,388 400,390" fill="#c8f0b0" opacity="0.85" stroke="#60c040" stroke-width="0.6"/>
<line x1="404" y1="393" x2="404" y2="333" stroke="#9ae870" stroke-width="1.2"/>
<polygon points="403.7,320.5 397,334 408.5,334" fill="#6cd838"/>
<polygon points="404.5,321 409,334 405,334" fill="#1a2a10" opacity="0.7"/>
<line x1="433" y1="378" x2="458" y2="368" stroke="#3a78e8" stroke-width="1.2"/>
<circle cx="458.3" cy="368.3" r="3.3" fill="#2a6ae8"/>
<polygon points="461,365 469,367 462,371" fill="#111"/>
</g>
<!-- cursor -->
<path d="M527,410 L527,423 L530,420 L533,425 L535,424 L532,419 L536,419 Z" fill="#fff" stroke="#222" stroke-width="0.8"/>
</svg>

<div class="a" style="left:276px;top:56px;width:1px;height:410px;background:#2a2a2a"></div>
<div class="a" style="left:278px;top:57.5px;width:29px;height:162px;background:#141a21;border-radius:3px"></div>
<svg style="left:285px;top:62px" width="16" height="5"><line x1="1" y1="1" x2="15" y2="1" stroke="#8a8a8a" stroke-width="1"/><line x1="1" y1="3.5" x2="15" y2="3.5" stroke="#8a8a8a" stroke-width="1"/></svg>
<div class="a" style="left:281px;top:72.4px;width:23.3px;height:14.6px;background:#4a4a4a;border-radius:2px"></div>
<div class="a" style="left:281px;top:87.6px;width:23.3px;height:15.5px;background:#46678c;border-radius:2px"></div>
<div class="a" style="left:281px;top:104.8px;width:23.3px;height:14.2px;background:#4a4a4a;border-radius:2px"></div>
<div class="a" style="left:281px;top:120.8px;width:23.3px;height:14.7px;background:#4a4a4a;border-radius:2px"></div>
<div class="a" style="left:281px;top:136.6px;width:23.3px;height:14.2px;background:#4a4a4a;border-radius:2px"></div>
<div class="a" style="left:281px;top:152.7px;width:23.3px;height:14.6px;background:#4a4a4a;border-radius:2px"></div>
<div class="a" style="left:281px;top:170.9px;width:23.3px;height:15.3px;background:#4a4a4a;border-radius:2px"></div>
<div class="a" style="left:281px;top:187.4px;width:23.3px;height:14.2px;background:#4a4a4a;border-radius:2px"></div>
<div class="a" style="left:281px;top:204px;width:23.3px;height:14.0px;background:#4a4a4a;border-radius:2px"></div>

<svg style="left:286px;top:73.3px" width="13" height="13" viewBox="0 0 11 11"><path d="M2.5,6.5 L1,4.8 Q0.5,4 1.4,3.8 L3,5.2 L3,1.6 Q3.2,0.8 3.9,1.6 L4.2,4.5 L4.4,0.8 Q5,0 5.6,0.8 L5.8,4.5 L6.3,1.2 Q6.9,0.5 7.4,1.2 L7.4,4.8 L8.3,2.4 Q8.9,1.8 9.4,2.6 L9,6.5 Q8.5,10 5.5,10.5 Q3.5,10.3 2.5,6.5 Z" fill="#e4e4e4"/></svg>
<svg style="left:286px;top:89px" width="13" height="13"><g stroke="#a8d0f0" stroke-width="1" fill="none"><line x1="6.5" y1="2" x2="6.5" y2="11"/><line x1="2" y1="6.5" x2="11" y2="6.5"/></g><g fill="#a8d0f0"><polygon points="6.5,0 3.8,3 9.2,3"/><polygon points="6.5,13 3.8,10 9.2,10"/><polygon points="0,6.5 3,3.8 3,9.2"/><polygon points="13,6.5 10,3.8 10,9.2"/></g></svg>
<svg style="left:286.5px;top:106px" width="12" height="12"><path d="M2.2,8 A4.5,4.5 0 0 1 8,1.8" fill="none" stroke="#c8c8c8" stroke-width="1"/><path d="M9.8,4 A4.5,4.5 0 0 1 4,10.2" fill="none" stroke="#c8c8c8" stroke-width="1"/><polygon points="8.5,0.5 9.5,3 7,2.8" fill="#c8c8c8"/><polygon points="3.5,11.5 2.5,9 5,9.2" fill="#c8c8c8"/></svg>
<svg style="left:287px;top:122.5px" width="11" height="11"><rect x="0.6" y="0.6" width="9.8" height="9.8" fill="none" stroke="#c8c8c8" stroke-width="1"/><rect x="0.6" y="6.2" width="4.2" height="4.2" fill="none" stroke="#c8c8c8" stroke-width="1"/><line x1="4.8" y1="6.2" x2="8.5" y2="2.5" stroke="#c8c8c8" stroke-width="1"/><polyline points="6,2.5 8.5,2.5 8.5,5" fill="none" stroke="#c8c8c8" stroke-width="1"/></svg>
<svg style="left:287px;top:138.5px" width="11" height="11"><rect x="1.5" y="1.5" width="8" height="8" fill="none" stroke="#c8c8c8" stroke-width="1"/><g fill="#c8c8c8"><rect x="0" y="0" width="3" height="3"/><rect x="8" y="0" width="3" height="3"/><rect x="0" y="8" width="3" height="3"/><rect x="8" y="8" width="3" height="3"/></g></svg>
<svg style="left:286px;top:153.5px" width="13" height="13"><circle cx="6.5" cy="6.5" r="4.5" fill="none" stroke="#c8c8c8" stroke-width="1"/><g stroke="#c8c8c8" stroke-width="0.9"><line x1="6.5" y1="2.5" x2="6.5" y2="10.5"/><line x1="2.5" y1="6.5" x2="10.5" y2="6.5"/></g><g fill="#c8c8c8"><polygon points="6.5,3 5,5 8,5"/><polygon points="6.5,10 5,8 8,8"/><polygon points="3,6.5 5,5 5,8"/><polygon points="10,6.5 8,5 8,8"/><rect x="10.5" y="0.5" width="2" height="2"/><rect x="0.5" y="10.5" width="2" height="2"/></g></svg>
<svg style="left:287px;top:173px" width="11" height="11"><path d="M1,5.5 L7,1 L7,10 Z" fill="none" stroke="#b8b8b8" stroke-width="1"/><line x1="9" y1="2.5" x2="9" y2="8.5" stroke="#b8b8b8" stroke-width="1"/></svg>
<svg style="left:286.5px;top:189.5px" width="12" height="10"><polygon points="0.5,1 4,3.5 0.5,6" fill="#d0d0d0"/><line x1="2" y1="8.5" x2="10" y2="8.5" stroke="#7ab0e0" stroke-width="1"/><line x1="2" y1="6" x2="2" y2="8.5" stroke="#d0d0d0" stroke-width="0.8"/><line x1="10" y1="5" x2="11.5" y2="5" stroke="#d0d0d0" stroke-width="1"/></svg>
<svg style="left:286.5px;top:205.5px" width="12" height="11"><polygon points="0.5,3 4,5.5 0.5,8" fill="#d0d0d0"/><g stroke="#7ab0e0" stroke-width="0.9"><line x1="7" y1="0.5" x2="7" y2="10.5"/><line x1="10" y1="0.5" x2="10" y2="10.5"/><line x1="6" y1="3" x2="11" y2="3"/><line x1="6" y1="8" x2="11" y2="8"/></g></svg>


<svg style="left:1030px;top:60px" width="90" height="85">
<rect x="7" y="3.5" width="10" height="1.6" fill="#2c3e52"/>
<g transform="translate(48.5,36.5)">
<polygon points="-5,-20.5 5,-20.5 0,-6" fill="#84d040"/><ellipse cx="0" cy="-20.5" rx="5" ry="1.8" fill="#9ae060"/>
<polygon points="-4.5,21 4.5,21 0,6" fill="#c4ccd0"/><ellipse cx="0" cy="21" rx="4.5" ry="1.6" fill="#d0d6da"/>
<polygon points="-18,-4 -18,4 -6,0" fill="#e6eaec"/><ellipse cx="-18" cy="0" rx="1.6" ry="4" fill="#f2f4f5"/>
<polygon points="22,-5 22,5 7,0" fill="#e4553f"/><ellipse cx="22" cy="0" rx="1.8" ry="5" fill="#c84030"/>
<rect x="-5.5" y="-5.5" width="11" height="11" fill="#f2f2f2"/>
</g>
<text x="48" y="11.5" font-size="8" fill="#e8e8e8" font-family="Liberation Sans" text-anchor="middle">y</text>
<text x="76" y="40.5" font-size="8" fill="#e8e8e8" font-family="Liberation Sans" text-anchor="middle">x</text>
<rect x="70" y="12" width="6" height="5" fill="#d8dde0"/><path d="M71.2,12 L71.2,10.5 Q73,8.5 74.8,10.5" fill="none" stroke="#d8dde0" stroke-width="1"/>
<polyline points="37,71 33,75 37,79" fill="none" stroke="#a8c8e8" stroke-width="1"/>
<text x="39" y="78.5" font-size="9.6" fill="#b4c8dc" font-family="Liberation Sans">Persp</text>
</svg>


<div class="tabbar" style="left:1124px;top:22px;width:156px;height:15px"></div>
<div class="tab" style="left:1124px;top:22px;width:70px;height:15px"></div>
<svg style="left:1128px;top:25px" width="9" height="9"><circle cx="4.5" cy="4.5" r="4.3" fill="#c8c8c8"/><rect x="3.8" y="3.6" width="1.5" height="3.8" fill="#3c3c3c"/><circle cx="4.5" cy="2.2" r="0.8" fill="#3c3c3c"/></svg>
<div class="t" style="left:1142.5px;top:24px;color:#cfcfcf">Inspector</div>
<div class="panel" style="left:1124px;top:37px;width:156px;height:683px;background:#383838"></div>
<div class="a" style="left:1124px;top:37px;width:156px;height:87px;background:#3e3e3e"></div>
<svg style="left:1128.5px;top:44px" width="17" height="17"><use href="#cube" width="17" height="17"/></svg>
<svg style="left:1144px;top:60.5px" width="6" height="4"><polygon points="0,0 6,0 3,3.5" fill="#d0d0d0"/></svg>
<div class="a" style="left:1160px;top:45px;width:10.5px;height:10.5px;background:#222;border-radius:1.5px"></div>
<svg style="left:1161.5px;top:47px" width="8" height="7"><polyline points="0.8,3.5 3,5.8 7.2,1" fill="none" stroke="#e8e8e8" stroke-width="1.2"/></svg>
<div class="a" style="left:1175px;top:43.5px;width:105px;height:14px;background:#2a2a2a;border-radius:2px"></div>
<div class="t" style="left:1177.5px;top:44.5px;color:#dadada;font-size:9.9px">PlayerFollowCamera</div>
<div class="t" style="left:1154.5px;top:63px;color:#a8a8a8;font-size:9.9px">Tag</div>
<div class="a" style="left:1175px;top:63px;width:105px;height:12px;background:#4b4b4b;border-radius:2px"></div>
<div class="t" style="left:1177.5px;top:62.5px;color:#cacaca;font-size:9.9px">Untagged</div>
<div class="t" style="left:1143px;top:88px;color:#a8a8a8;font-size:9.9px">Prefab</div>
<div class="a" style="left:1175px;top:87.5px;width:105px;height:13px;background:#2a2a2a;border-radius:2px"></div>
<svg style="left:1177px;top:89.5px" width="8.5" height="8.5"><circle cx="4.25" cy="4.25" r="4.2" fill="#6cc0ee"/><polyline points="1.2,2.8 4.25,4.4 7.3,2.8" fill="none" stroke="#2a5a7c" stroke-width="0.8"/><line x1="4.25" y1="4.4" x2="4.25" y2="8.2" stroke="#2a5a7c" stroke-width="0.8"/></svg>
<div class="t" style="left:1186.5px;top:88px;color:#cfcfcf;font-size:9.9px">PlayerFollowCamera</div>
<div class="a" style="left:1175px;top:104.5px;width:101px;height:12px;background:#474747;border-radius:2px"></div>
<div class="t" style="left:1177.5px;top:104.5px;color:#cacaca;font-size:9.9px">Overrides</div>
<svg style="left:1266.5px;top:109px" width="6" height="4"><polygon points="0,0 6,0 3,3.5" fill="#d0d0d0"/></svg>
<div class="a" style="left:1124px;top:123.7px;width:156px;height:1px;background:#262626"></div>
<div class="a" style="left:1124px;top:124.7px;width:156px;height:16px;background:#3e3e3e"></div>
<div class="a" style="left:1124px;top:196px;width:156px;height:1px;background:#262626"></div>
<div class="a" style="left:1124px;top:197px;width:156px;height:15.5px;background:#3e3e3e"></div>

<svg style="left:1128.5px;top:130.5px" width="7" height="6"><use href="#tri_d" width="7" height="6"/></svg>
<svg style="left:1140px;top:127px" width="12" height="11"><line x1="6" y1="6" x2="6" y2="1.5" stroke="#60c040" stroke-width="2"/><line x1="6" y1="6" x2="1.5" y2="8.8" stroke="#6ab4e8" stroke-width="2"/><line x1="6" y1="6" x2="10.5" y2="8.8" stroke="#e87850" stroke-width="2"/></svg>
<div class="t b" style="left:1170.3px;top:127.5px;color:#d2d2d2;font-size:9.6px">Transform</div>
<div class="t b" style="left:1138.7px;top:145.7px;color:#d0d0d0;font-size:9.1px">Position</div>
<div class="t" style="left:1265.5px;top:145.7px;color:#d0d0d0;font-size:9.9px">X</div>
<div class="a" style="left:1277.5px;top:145.7px;width:3px;height:12px;background:#2a2a2a"></div>
<div class="t b" style="left:1138.7px;top:161.2px;color:#d0d0d0;font-size:9.1px">Rotation</div>
<div class="t" style="left:1265.5px;top:161.2px;color:#d0d0d0;font-size:9.9px">X</div>
<div class="a" style="left:1277.5px;top:161.2px;width:3px;height:12px;background:#2a2a2a"></div>
<div class="t" style="left:1138.7px;top:176.5px;color:#b8b8b8;font-size:9.6px">Scale</div>
<div class="t" style="left:1265.5px;top:176.5px;color:#d0d0d0;font-size:9.9px">X</div>
<div class="a" style="left:1277.5px;top:176.5px;width:3px;height:12px;background:#2a2a2a"></div>
<svg style="left:1248.5px;top:178.5px" width="10" height="8"><path d="M3.5,1 L2,1 Q0.5,1 0.5,4 Q0.5,7 2,7 L4,7 M6.5,1 L8,1 Q9.5,1 9.5,4 Q9.5,7 8,7 L6,7 M1,0 L9,8" fill="none" stroke="#b8b8b8" stroke-width="1"/></svg>
<svg style="left:1128.5px;top:202px" width="7" height="6"><use href="#tri_d" width="7" height="6"/></svg>
<svg style="left:1139.5px;top:199px" width="12" height="11"><circle cx="4" cy="4" r="3.2" fill="#777"/><path d="M2,10.5 L2,6 Q2,3 5.5,3 Q10,3 11,6.5 L11,9 Q11,10.5 9.5,10.5 Z" fill="#c81c1c"/></svg>
<div class="a" style="left:1155.3px;top:199.5px;width:9.5px;height:10px;background:#222;border-radius:1.5px"></div>
<svg style="left:1156.5px;top:201.5px" width="8" height="7"><polyline points="0.8,3.5 3,5.8 7.2,1" fill="none" stroke="#e8e8e8" stroke-width="1.2"/></svg>
<div class="t b" style="left:1170px;top:198.5px;color:#d8d8d8;font-size:9.3px">CinemachineVirtualCamera</div>
<div class="t" style="left:1138.7px;top:217px;color:#bdbdbd;font-size:9.5px">Status: Live</div>
<div class="t" style="left:1138.7px;top:232.6px;color:#bdbdbd;font-size:9.5px">Game Window Guides</div>
<div class="t" style="left:1138.7px;top:247.8px;color:#bdbdbd;font-size:9.5px">Save During Play</div>
<div class="t" style="left:1138.7px;top:263.2px;color:#bdbdbd;font-size:9.5px">Priority</div>
<div class="t b" style="left:1138.7px;top:278.5px;color:#d2d2d2;font-size:9.1px">Follow</div>
<div class="t" style="left:1138.7px;top:294px;color:#bdbdbd;font-size:9.5px">Look At</div>
<div class="t" style="left:1138.7px;top:309.2px;color:#bdbdbd;font-size:9.5px">Standby Update</div>
<div class="t" style="left:1138.7px;top:324.4px;color:#bdbdbd;font-size:9.5px">Lens Vertical FOV</div>
<svg style="left:1128.5px;top:326.9px" width="6" height="7"><use href="#tri_r" width="6" height="7"/></svg>
<div class="t" style="left:1138.7px;top:339.8px;color:#bdbdbd;font-size:9.5px">Transitions</div>
<svg style="left:1128.5px;top:342.3px" width="6" height="7"><use href="#tri_r" width="6" height="7"/></svg>
<div class="t" style="left:1138.7px;top:355px;color:#bdbdbd;font-size:9.5px">Body</div>
<svg style="left:1128.5px;top:357.5px" width="6" height="7"><use href="#tri_r" width="6" height="7"/></svg>
<div class="t" style="left:1138.7px;top:370.7px;color:#bdbdbd;font-size:9.5px">Aim</div>
<div class="t" style="left:1138.7px;top:386px;color:#bdbdbd;font-size:9.5px">Noise</div>
<svg style="left:1128.5px;top:388.5px" width="6" height="7"><use href="#tri_r" width="6" height="7"/></svg>
<div class="t b" style="left:1138.7px;top:407.6px;color:#d2d2d2;font-size:9.1px">Extensions</div>
<div class="t" style="left:1138.7px;top:422.8px;color:#bdbdbd;font-size:9.5px">Add Extension</div>
<div class="a" style="left:1123.5px;top:278.5px;width:2px;height:12px;background:#3788c4"></div>

<div class="a" style="left:1264.5px;top:217.5px;width:16px;height:11px;background:#585858;border-radius:2px"></div>
<div class="a" style="left:1264.5px;top:233px;width:11px;height:11px;background:#252525;border-radius:1.5px"></div>
<svg style="left:1266px;top:235px" width="8" height="7"><polyline points="0.8,3.5 3,5.8 7.2,1" fill="none" stroke="#e8e8e8" stroke-width="1.2"/></svg>
<div class="a" style="left:1264.5px;top:248.3px;width:11px;height:11px;background:#2a2a2a;border-radius:1.5px"></div>
<div class="a" style="left:1264.5px;top:263px;width:16px;height:12.5px;background:#2a2a2a;border-radius:2px"></div>
<div class="t" style="left:1267px;top:263.2px;color:#c8c8c8;font-size:9.9px">10</div>
<div class="a" style="left:1264.5px;top:278.3px;width:16px;height:12.5px;background:#2a2a2a;border-radius:2px"></div>
<svg style="left:1266.5px;top:281px" width="8" height="7"><line x1="4" y1="3.5" x2="4" y2="0.5" stroke="#e8a040" stroke-width="1.4"/><line x1="4" y1="3.5" x2="1" y2="6" stroke="#6ab4e8" stroke-width="1.4"/><line x1="4" y1="3.5" x2="7" y2="6" stroke="#e87850" stroke-width="1.4"/></svg>
<div class="t" style="left:1274px;top:278.5px;color:#c8c8c8;font-size:9.9px">P</div>
<div class="a" style="left:1264.5px;top:293.7px;width:16px;height:12.5px;background:#2a2a2a;border-radius:2px"></div>
<div class="t" style="left:1267px;top:294px;color:#c8c8c8;font-size:9.9px">No</div>
<div class="a" style="left:1264.5px;top:309px;width:16px;height:12.5px;background:#474747;border-radius:2px"></div>
<div class="t" style="left:1267px;top:309.2px;color:#c8c8c8;font-size:9.9px">Ro</div>
<div class="a" style="left:1264.5px;top:324.3px;width:16px;height:12.5px;background:#2a2a2a;border-radius:2px"></div>
<div class="t" style="left:1267px;top:324.5px;color:#c8c8c8;font-size:9.9px">40</div>
<div class="a" style="left:1264.5px;top:355px;width:16px;height:12.5px;background:#474747;border-radius:2px"></div>
<div class="t" style="left:1267px;top:355px;color:#c8c8c8;font-size:9.9px">3rd</div>
<div class="a" style="left:1264.5px;top:370.5px;width:16px;height:12.5px;background:#474747;border-radius:2px"></div>
<div class="t" style="left:1267px;top:370.7px;color:#c8c8c8;font-size:9.9px">Do</div>
<div class="a" style="left:1264.5px;top:386px;width:16px;height:12.5px;background:#474747;border-radius:2px"></div>
<div class="t" style="left:1267px;top:386px;color:#c8c8c8;font-size:9.9px">Bas</div>
<div class="a" style="left:1264.5px;top:422.5px;width:16px;height:12.5px;background:#474747;border-radius:2px"></div>
<div class="t" style="left:1267.5px;top:422.8px;color:#c8c8c8;font-size:9.9px">(se</div>
<div class="a" style="left:1124px;top:444.5px;width:156px;height:1px;background:#262626"></div>
<div class="a" style="left:1210px;top:450px;width:72px;height:17px;background:#565656;border-radius:3px"></div>
<div class="t" style="left:1263px;top:452.5px;color:#d8d8d8;font-size:9.9px">Add</div>


<div class="tabbar" style="left:0;top:468px;width:1122px;height:14px"></div>
<div class="tab" style="left:0;top:468px;width:59px;height:14px"></div>
<svg style="left:3px;top:471px" width="10" height="8"><path d="M0,0.6 L3.6,0.6 L4.6,1.6 L9.5,1.6 L9.5,8 L0,8 Z" fill="#c0c0c0"/></svg>
<div class="t" style="left:15.5px;top:469.5px;color:#cfcfcf">Project</div>
<svg style="left:66px;top:470px" width="8" height="9"><rect x="0.5" y="0.5" width="7" height="8" rx="0.8" fill="#c0c0c0"/><g stroke="#282828" stroke-width="0.8"><line x1="2" y1="2.8" x2="6" y2="2.8"/><line x1="2" y1="4.6" x2="6" y2="4.6"/><line x1="2" y1="6.4" x2="6" y2="6.4"/></g></svg>
<div class="t" style="left:78.5px;top:469.5px;color:#c4c4c4">Console</div>
<svg style="left:133px;top:470px" width="10" height="10"><polygon points="5,0.6 9.2,3 9.2,7.6 5,10 0.8,7.6 0.8,3" fill="none" stroke="#c0c0c0" stroke-width="1"/><circle cx="5" cy="5.2" r="1.6" fill="none" stroke="#c0c0c0" stroke-width="1"/></svg>
<div class="t" style="left:145.7px;top:469.5px;color:#c4c4c4">Unity Version Control</div>
<svg style="left:1095.5px;top:470px" width="9" height="9"><path d="M2.2,4.2 L2.2,2.8 Q2.2,0.7 4.5,0.7 Q6.8,0.7 6.8,2.8" fill="none" stroke="#c0c0c0" stroke-width="1"/><rect x="0.8" y="4.2" width="7.4" height="4.3" rx="0.6" fill="none" stroke="#c0c0c0" stroke-width="1"/></svg>
<svg style="left:1110.5px;top:470px" width="3" height="10"><circle cx="1.5" cy="1.3" r="0.9" fill="#c0c0c0"/><circle cx="1.5" cy="4.6" r="0.9" fill="#c0c0c0"/><circle cx="1.5" cy="7.9" r="0.9" fill="#c0c0c0"/></svg>
<div class="panel" style="left:0;top:482px;width:1122px;height:238px;background:#333333"></div>
<div class="tb" style="left:0;top:482px;width:1122px;height:15px;background:#3a3a3a"></div>
<svg style="left:3px;top:485px" width="10" height="10"><rect x="4.3" y="0.5" width="1.4" height="9" fill="#d0d0d0"/><rect x="0.5" y="4.3" width="9" height="1.4" fill="#d0d0d0"/></svg>
<svg style="left:15.5px;top:488.5px" width="6" height="4"><polygon points="0,0 6,0 3,3.5" fill="#c0c0c0"/></svg>
<div class="a" style="left:765px;top:483.3px;width:244px;height:12.7px;background:#2a2a2a;border-radius:3px;border:1px solid #262626"></div>
<svg style="left:768px;top:486.5px" width="7" height="7"><circle cx="2.8" cy="2.8" r="2" fill="none" stroke="#c0c0c0" stroke-width="1"/><line x1="4.2" y1="4.2" x2="6.3" y2="6.3" stroke="#c0c0c0" stroke-width="1.2"/></svg>
<svg style="left:998px;top:485px" width="10" height="10"><rect x="3" y="0.6" width="6.4" height="6.4" fill="none" stroke="#b0b0b0" stroke-width="1"/><rect x="0.6" y="5.4" width="4" height="4" fill="#2a2a2a" stroke="#b0b0b0" stroke-width="1"/><line x1="5" y1="5" x2="8" y2="2" stroke="#b0b0b0" stroke-width="1"/></svg>
<div class="a" style="left:1012px;top:483px;width:1px;height:14px;background:#2f2f2f"></div>
<div class="a" style="left:1032px;top:483px;width:1px;height:14px;background:#2f2f2f"></div>
<div class="a" style="left:1052px;top:483px;width:1px;height:14px;background:#2f2f2f"></div>
<div class="a" style="left:1072px;top:483px;width:1px;height:14px;background:#2f2f2f"></div>
<div class="a" style="left:1092px;top:483px;width:1px;height:14px;background:#2f2f2f"></div>
<svg style="left:1016px;top:485px" width="11" height="10"><rect x="0.5" y="0.5" width="4.5" height="4.5" fill="#c8c8c8"/><circle cx="2.8" cy="7.2" r="2.5" fill="#c8c8c8"/><polygon points="7.5,2 10.5,8 4.5,8" fill="#c8c8c8"/></svg>
<svg style="left:1036px;top:485px" width="11" height="10"><path d="M1,5 L5,1 L9.5,1 L9.5,5.5 L5.5,9.5 Z" fill="#c8c8c8"/><circle cx="7.5" cy="3" r="0.9" fill="#333"/></svg>
<svg style="left:1056px;top:484.5px" width="11" height="11"><circle cx="5.5" cy="5.5" r="5" fill="#d0d0d0"/><rect x="4.7" y="2" width="1.6" height="4.5" fill="#333"/><rect x="4.7" y="7.5" width="1.6" height="1.5" fill="#333"/></svg>
<svg style="left:1076px;top:485px" width="11" height="10"><polygon points="5.5,0.3 6.9,3.6 10.5,3.8 7.7,6.1 8.6,9.6 5.5,7.6 2.4,9.6 3.3,6.1 0.5,3.8 4.1,3.6" fill="#8a8a8a"/></svg>
<svg style="left:1095px;top:485px" width="12" height="10"><path d="M0.8,5 Q6,0 11.2,5 Q6,10 0.8,5 Z" fill="none" stroke="#b8b8b8" stroke-width="1"/><line x1="2" y1="9.5" x2="10" y2="0.5" stroke="#b8b8b8" stroke-width="1"/></svg>
<div class="t" style="left:1107.5px;top:484px;color:#bdbdbd">19</div>
<div class="a" style="left:0;top:497px;width:155px;height:223px;background:#383838"></div>
<div class="a" style="left:155px;top:497px;width:2px;height:223px;background:#272727"></div>
<div class="a" style="left:157px;top:497px;width:965px;height:17.5px;background:#3d3d3d"></div>
<div class="a" style="left:0;top:656.5px;width:155px;height:12.8px;background:#464646"></div>

<div class="t" style="left:160.9px;top:499.5px;color:#b8b8b8">Assets</div>
<div class="t" style="left:202.5px;top:499.5px;color:#b8b8b8">StarterAssets</div>
<div class="t" style="left:274.4px;top:499.5px;color:#b8b8b8">ThirdPersonController</div>
<div class="t b" style="left:382.8px;top:499.5px;color:#d6d6d6">Character</div>
<svg style="left:194.5px;top:502px" width="5" height="8"><polyline points="1,0.8 4,4 1,7.2" fill="none" stroke="#9a9a9a" stroke-width="1"/></svg>
<svg style="left:266.5px;top:502px" width="5" height="8"><polyline points="1,0.8 4,4 1,7.2" fill="none" stroke="#9a9a9a" stroke-width="1"/></svg>
<svg style="left:374px;top:502px" width="5" height="8"><polyline points="1,0.8 4,4 1,7.2" fill="none" stroke="#9a9a9a" stroke-width="1"/></svg>
<div class="t b" style="left:24.6px;top:498.4px;color:#d4d4d4">Favorites</div>
<svg style="left:1.5px;top:500.9px" width="7" height="6"><use href="#tri_d" width="7" height="6"/></svg>
<svg style="left:12px;top:499.9px" width="9" height="9"><polygon points="4.5,0.2 5.6,3.1 8.8,3.2 6.3,5.1 7.2,8.3 4.5,6.5 1.8,8.3 2.7,5.1 0.2,3.2 3.4,3.1" fill="#d0d0d0"/></svg>
<div class="t" style="left:34.5px;top:510.6px;color:#c4c4c4">All Materials</div>
<svg style="left:22px;top:512.1px" width="9" height="9"><circle cx="3.6" cy="3.6" r="2.7" fill="none" stroke="#c4c4c4" stroke-width="1"/><line x1="5.6" y1="5.6" x2="8.3" y2="8.3" stroke="#c4c4c4" stroke-width="1.2"/></svg>
<div class="t" style="left:34.5px;top:522.8px;color:#c4c4c4">All Models</div>
<svg style="left:22px;top:524.3px" width="9" height="9"><circle cx="3.6" cy="3.6" r="2.7" fill="none" stroke="#c4c4c4" stroke-width="1"/><line x1="5.6" y1="5.6" x2="8.3" y2="8.3" stroke="#c4c4c4" stroke-width="1.2"/></svg>
<div class="t" style="left:34.5px;top:535px;color:#c4c4c4">All Prefabs</div>
<svg style="left:22px;top:536.5px" width="9" height="9"><circle cx="3.6" cy="3.6" r="2.7" fill="none" stroke="#c4c4c4" stroke-width="1"/><line x1="5.6" y1="5.6" x2="8.3" y2="8.3" stroke="#c4c4c4" stroke-width="1.2"/></svg>
<div class="t b" style="left:24.6px;top:558.8px;color:#d4d4d4">Assets</div>
<svg style="left:1.5px;top:561.3px" width="7" height="6"><use href="#tri_d" width="7" height="6"/></svg>
<svg style="left:11px;top:560.3px" width="11" height="9"><use href="#folderopen" width="11" height="9"/></svg>
<div class="t" style="left:34.5px;top:571px;color:#c4c4c4">Scenes</div>
<svg style="left:22px;top:572.5px" width="10" height="9"><use href="#folder" width="10" height="9"/></svg>
<div class="t" style="left:34.5px;top:583.4px;color:#c4c4c4">Settings</div>
<svg style="left:22px;top:584.9px" width="10" height="9"><use href="#folder" width="10" height="9"/></svg>
<div class="t" style="left:34.5px;top:595.7px;color:#c4c4c4">StarterAssets</div>
<svg style="left:12.5px;top:598.2px" width="7" height="6"><use href="#tri_d" width="7" height="6"/></svg>
<svg style="left:22px;top:597.2px" width="11" height="9"><use href="#folderopen" width="11" height="9"/></svg>
<div class="t" style="left:45.4px;top:607.9px;color:#c4c4c4">Environment</div>
<svg style="left:23.5px;top:610.4px" width="6" height="7"><use href="#tri_r" width="6" height="7"/></svg>
<svg style="left:33px;top:609.4px" width="10" height="9"><use href="#folder" width="10" height="9"/></svg>
<div class="t" style="left:45.4px;top:620.2px;color:#c4c4c4">InputSystem</div>
<svg style="left:33px;top:621.7px" width="10" height="9"><use href="#folder" width="10" height="9"/></svg>
<div class="t" style="left:45.4px;top:632.5px;color:#c4c4c4">Mobile</div>
<svg style="left:23.5px;top:635.0px" width="6" height="7"><use href="#tri_r" width="6" height="7"/></svg>
<svg style="left:33px;top:634.0px" width="10" height="9"><use href="#folder" width="10" height="9"/></svg>
<div class="t" style="left:45.4px;top:644.6px;color:#c4c4c4">ThirdPersonController</div>
<svg style="left:23.5px;top:647.1px" width="7" height="6"><use href="#tri_d" width="7" height="6"/></svg>
<svg style="left:33px;top:646.1px" width="11" height="9"><use href="#folderopen" width="11" height="9"/></svg>
<div class="t" style="left:56.2px;top:657px;color:#c4c4c4">Character</div>
<svg style="left:34.5px;top:659.5px" width="6" height="7"><use href="#tri_r" width="6" height="7"/></svg>
<svg style="left:43.5px;top:658.5px" width="10" height="9"><use href="#folder" width="10" height="9"/></svg>
<div class="t" style="left:56.2px;top:669.3px;color:#c4c4c4">Prefabs</div>
<svg style="left:43.5px;top:670.8px" width="10" height="9"><use href="#folder" width="10" height="9"/></svg>
<div class="t" style="left:56.2px;top:681.6px;color:#c4c4c4">Scenes</div>
<svg style="left:34.5px;top:684.1px" width="6" height="7"><use href="#tri_r" width="6" height="7"/></svg>
<svg style="left:43.5px;top:683.1px" width="10" height="9"><use href="#folder" width="10" height="9"/></svg>
<div class="t" style="left:56.2px;top:693.8px;color:#c4c4c4">Scripts</div>
<svg style="left:43.5px;top:695.3px" width="10" height="9"><use href="#folder" width="10" height="9"/></svg>
<div class="t" style="left:45.4px;top:706.2px;color:#c4c4c4">TutorialInfo</div>
<svg style="left:23.5px;top:708.7px" width="6" height="7"><use href="#tri_r" width="6" height="7"/></svg>
<svg style="left:33px;top:707.7px" width="10" height="9"><use href="#folder" width="10" height="9"/></svg>
<svg style="left:175.0px;top:531px" width="37" height="32"><path d="M0,3 Q0,0 3,0 L14,0 Q15.5,0 16.5,1.5 L19.5,5.5 L34,5.5 Q37,5.5 37,8.5 L37,29 Q37,31.5 34,31.5 L3,31.5 Q0,31.5 0,29 Z" fill="#c2c2c2"/></svg>
<div class="t" style="left:152.2px;width:80px;text-align:center;top:572px;color:#c8c8c8;font-size:8.3px">Animations</div>
<svg style="left:233.25px;top:531px" width="37" height="32"><path d="M0,3 Q0,0 3,0 L14,0 Q15.5,0 16.5,1.5 L19.5,5.5 L34,5.5 Q37,5.5 37,8.5 L37,29 Q37,31.5 34,31.5 L3,31.5 Q0,31.5 0,29 Z" fill="#c2c2c2"/></svg>
<div class="t" style="left:211.6px;width:80px;text-align:center;top:572px;color:#c8c8c8;font-size:8.3px">Materials</div>
<svg style="left:291.5px;top:531px" width="37" height="32"><path d="M0,3 Q0,0 3,0 L14,0 Q15.5,0 16.5,1.5 L19.5,5.5 L34,5.5 Q37,5.5 37,8.5 L37,29 Q37,31.5 34,31.5 L3,31.5 Q0,31.5 0,29 Z" fill="#c2c2c2"/></svg>
<div class="t" style="left:270px;width:80px;text-align:center;top:572px;color:#c8c8c8;font-size:8.3px">Models</div>
<svg style="left:349.75px;top:531px" width="37" height="32"><path d="M0,3 Q0,0 3,0 L14,0 Q15.5,0 16.5,1.5 L19.5,5.5 L34,5.5 Q37,5.5 37,8.5 L37,29 Q37,31.5 34,31.5 L3,31.5 Q0,31.5 0,29 Z" fill="#c2c2c2"/></svg>
<div class="t" style="left:327.8px;width:80px;text-align:center;top:572px;color:#c8c8c8;font-size:8.3px">Sfx</div>
<svg style="left:408.0px;top:531px" width="37" height="32"><path d="M0,3 Q0,0 3,0 L14,0 Q15.5,0 16.5,1.5 L19.5,5.5 L34,5.5 Q37,5.5 37,8.5 L37,29 Q37,31.5 34,31.5 L3,31.5 Q0,31.5 0,29 Z" fill="#c2c2c2"/></svg>
<div class="t" style="left:386.9px;width:80px;text-align:center;top:572px;color:#c8c8c8;font-size:8.3px">Textures</div>
</div></body></html>
